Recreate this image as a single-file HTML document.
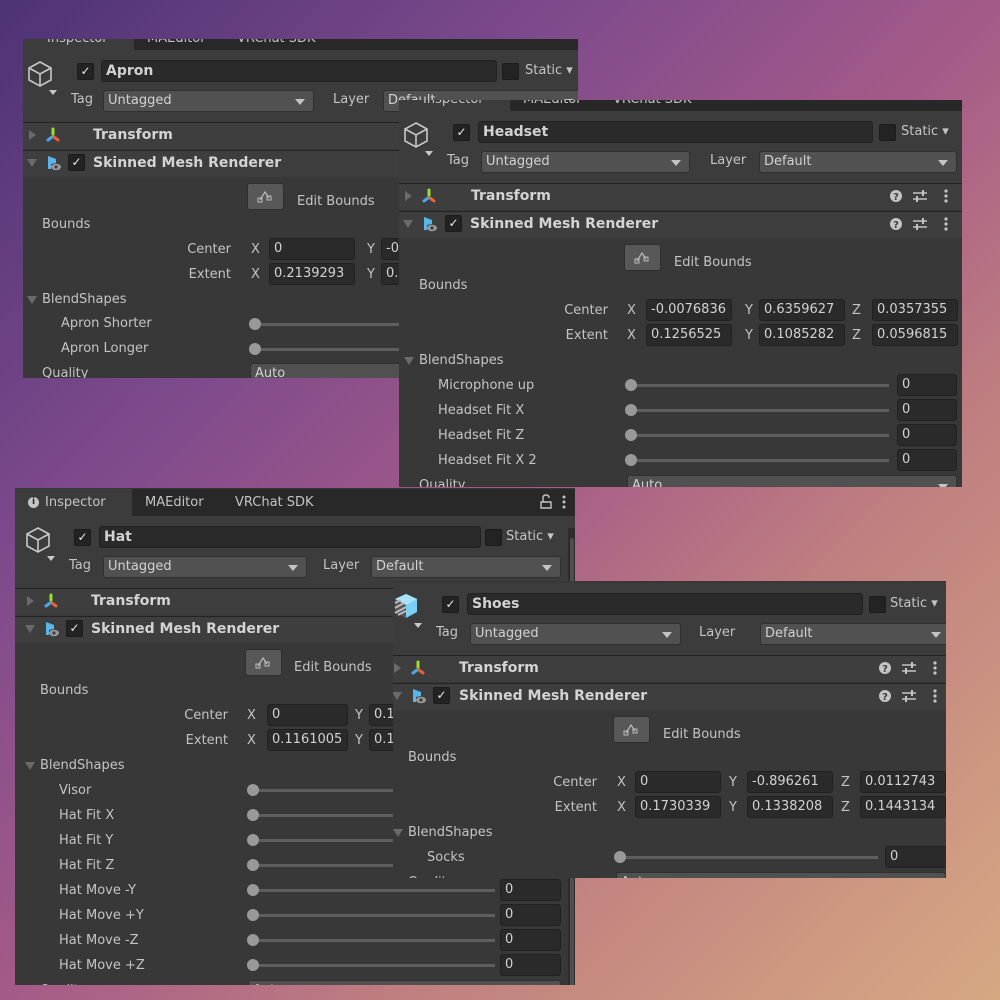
<!DOCTYPE html>
<html><head><meta charset="utf-8"><style>
*{margin:0;padding:0;box-sizing:border-box}
body{width:1000px;height:1000px;overflow:hidden;position:relative;font-family:"DejaVu Sans","Liberation Sans",sans-serif;font-size:13px;color:#c4c4c4;
background:linear-gradient(135deg,#4d3374 0%,#7d4a8c 28%,#a45a88 50%,#c07f80 70%,#d6a882 100%)}
.p{position:absolute;overflow:hidden;background:#383838}
.o{position:absolute}
.a{position:absolute}
.t{position:absolute;height:20px;line-height:20px;white-space:nowrap}
.b{font-weight:bold;color:#d4d4d4;font-size:14px}
.tab{background:#282828;position:absolute;left:-40px;right:-40px;top:-37px;height:27px}
.hd{background:#3c3c3c;position:absolute;left:-40px;right:-40px;top:-10px;height:72px}
.row{background:#3e3e3e;position:absolute;left:-40px;right:-40px;height:27px;border-top:1px solid #232323}
.cb{position:absolute;width:17px;height:17px;background:#232323;border:1px solid #1c1c1c;border-radius:2px;color:#e8e8e8;font-size:12px;line-height:15px;text-align:center}
.fld{position:absolute;height:22px;background:#2a2a2a;border:1px solid #212121;border-radius:3px;line-height:20px;padding-left:4px;white-space:nowrap;overflow:hidden;color:#d2d2d2}
.dd{position:absolute;height:22px;background:#515151;border:1px solid #303030;border-radius:3px;line-height:20px;padding-left:4px;white-space:nowrap;overflow:hidden;color:#d2d2d2}
.dd:after{content:"";position:absolute;right:8px;top:8px;border-left:5px solid transparent;border-right:5px solid transparent;border-top:6px solid #c4c4c4}
.arr{position:absolute;width:0;height:0;border-top:5px solid transparent;border-bottom:5px solid transparent;border-left:7px solid #6a6a6a}
.arrd{position:absolute;width:0;height:0;border-left:5px solid transparent;border-right:5px solid transparent;border-top:8px solid #6a6a6a}
.trk{position:absolute;height:3px;background:#5e5e5e}
.knob{position:absolute;width:12px;height:12px;border-radius:6px;background:#999}
.eb{position:absolute;width:37px;height:27px;background:#585858;border-radius:3px;border:1px solid #2e2e2e}
</style></head><body>

<!-- APRON -->
<div class="p" style="left:23px;top:39px;width:555px;height:339px">
<div class="o" style="left:0;top:21px;width:560px;height:400px">
<div class="tab"><div class="a" style="left:34px;top:0;width:117px;height:27px;background:#3c3c3c"></div></div>
<div class="t" style="left:24px;top:-31px">Inspector</div><div class="t" style="left:124px;top:-31px">MAEditor</div><div class="t" style="left:214px;top:-31px">VRChat SDK</div>
<div class="hd"></div>
<svg class="a" style="left:4px;top:0" width="34" height="36" viewBox="0 0 34 36"><path d="M13 2 L24 8 L24 20 L13 26 L2 20 L2 8 Z M2 8 L13 14 L24 8 M13 14 L13 26" fill="none" stroke="#c8c8c8" stroke-width="1.6"/><path d="M22 30 L30 30 L26 35 Z" fill="#c8c8c8"/></svg>
<div class="cb" style="left:54px;top:3px">✓</div>
<div class="fld b" style="left:78px;top:0;width:396px">Apron</div>
<div class="cb" style="left:479px;top:3px"></div>
<div class="t" style="left:502px;top:1px">Static ▾</div>
<div class="t" style="left:48px;top:30px">Tag</div>
<div class="dd" style="left:80px;top:30px;width:211px">Untagged</div>
<div class="t" style="left:310px;top:30px">Layer</div>
<div class="dd" style="left:360px;top:30px;width:200px">Default</div>
<div class="row" style="top:62px"></div><div class="row" style="top:90px"></div>
<div class="arr" style="left:6px;top:70px"></div>
<svg class="a" style="left:22px;top:67px" width="16" height="16"><path d="M8 2V7" stroke="#9be02e" stroke-width="3" stroke-linecap="round"/><path d="M7 10L3 13" stroke="#4aa8e8" stroke-width="3" stroke-linecap="round"/><path d="M9 10L13 13" stroke="#e8613a" stroke-width="3" stroke-linecap="round"/></svg>
<div class="t b" style="left:70px;top:65px">Transform</div>
<div class="arrd" style="left:4px;top:99px"></div>
<svg class="a" style="left:22px;top:94px" width="18" height="18"><path d="M3 2L11 5V9L6 10V15H3Z" fill="#59b6ea"/><ellipse cx="11" cy="13" rx="5" ry="3.2" fill="#9a9a9a"/><circle cx="11" cy="13" r="1.6" fill="#3e3e3e"/></svg>
<div class="cb" style="left:45px;top:94px">✓</div>
<div class="t b" style="left:70px;top:93px">Skinned Mesh Renderer</div>
<div class="eb" style="left:224px;top:123px"></div>
<svg class="a" style="left:234px;top:129px" width="18" height="14"><path d="M3 11L8 3L12 9" fill="none" stroke="#bbb" stroke-width="1.2"/><rect x="1" y="9" width="4" height="4" fill="none" stroke="#bbb"/><rect x="10" y="7" width="4" height="4" fill="none" stroke="#bbb"/></svg>
<div class="t" style="left:274px;top:132px">Edit Bounds</div>
<div class="t" style="left:19px;top:155px">Bounds</div>
<div class="t" style="left:130px;top:180px;width:78px;text-align:right">Center</div>
<div class="t" style="left:228px;top:180px">X</div><div class="fld" style="left:246px;top:178px;width:86px">0</div>
<div class="t" style="left:344px;top:180px">Y</div><div class="fld" style="left:358px;top:178px;width:86px">-0.0</div>
<div class="t" style="left:130px;top:205px;width:78px;text-align:right">Extent</div>
<div class="t" style="left:228px;top:205px">X</div><div class="fld" style="left:246px;top:203px;width:86px">0.2139293</div>
<div class="t" style="left:344px;top:205px">Y</div><div class="fld" style="left:358px;top:203px;width:86px">0.1</div>
<div class="arrd" style="left:4px;top:236px"></div><div class="t" style="left:19px;top:230px">BlendShapes</div>
<div class="t" style="left:38px;top:254px">Apron Shorter</div><div class="trk" style="left:232px;top:263px;width:260px"></div><div class="knob" style="left:226px;top:258px"></div>
<div class="t" style="left:38px;top:279px">Apron Longer</div><div class="trk" style="left:232px;top:288px;width:260px"></div><div class="knob" style="left:226px;top:283px"></div>
<div class="t" style="left:19px;top:304px">Quality</div><div class="dd" style="left:227px;top:303px;width:330px">Auto</div>
</div></div>

<!-- HEADSET -->
<div class="p" style="left:399px;top:100px;width:563px;height:387px">
<div class="o" style="left:0;top:21px;width:558px;height:400px">
<div class="tab"><div class="a" style="left:34px;top:0;width:117px;height:27px;background:#3c3c3c"></div></div>
<div class="t" style="left:24px;top:-31px">Inspector</div><div class="t" style="left:124px;top:-31px">MAEditor</div><div class="t" style="left:214px;top:-31px">VRChat SDK</div>
<div class="hd"></div>
<svg class="a" style="left:4px;top:0" width="34" height="36" viewBox="0 0 34 36"><path d="M13 2 L24 8 L24 20 L13 26 L2 20 L2 8 Z M2 8 L13 14 L24 8 M13 14 L13 26" fill="none" stroke="#c8c8c8" stroke-width="1.6"/><path d="M22 30 L30 30 L26 35 Z" fill="#c8c8c8"/></svg>
<div class="cb" style="left:54px;top:3px">✓</div>
<div class="fld b" style="left:79px;top:0;width:395px">Headset</div>
<div class="cb" style="left:480px;top:3px"></div>
<div class="t" style="left:502px;top:1px">Static ▾</div>
<div class="t" style="left:48px;top:30px">Tag</div>
<div class="dd" style="left:82px;top:30px;width:209px">Untagged</div>
<div class="t" style="left:311px;top:30px">Layer</div>
<div class="dd" style="left:360px;top:30px;width:198px">Default</div>
<div class="row" style="top:62px"></div><div class="row" style="top:90px"></div>
<div class="arr" style="left:6px;top:70px"></div>
<svg class="a" style="left:22px;top:67px" width="16" height="16"><path d="M8 2V7" stroke="#9be02e" stroke-width="3" stroke-linecap="round"/><path d="M7 10L3 13" stroke="#4aa8e8" stroke-width="3" stroke-linecap="round"/><path d="M9 10L13 13" stroke="#e8613a" stroke-width="3" stroke-linecap="round"/></svg>
<div class="t b" style="left:72px;top:65px">Transform</div>
<div class="arrd" style="left:4px;top:99px"></div>
<svg class="a" style="left:22px;top:94px" width="18" height="18"><path d="M3 2L11 5V9L6 10V15H3Z" fill="#59b6ea"/><ellipse cx="11" cy="13" rx="5" ry="3.2" fill="#9a9a9a"/><circle cx="11" cy="13" r="1.6" fill="#3e3e3e"/></svg>
<div class="cb" style="left:46px;top:94px">✓</div>
<div class="t b" style="left:71px;top:93px">Skinned Mesh Renderer</div>
<svg class="a" style="left:490px;top:68px" width="70" height="14"><circle cx="7" cy="7" r="6" fill="#c4c4c4"/><text x="7" y="11" font-size="10" font-weight="bold" text-anchor="middle" fill="#3e3e3e" font-family="DejaVu Sans">?</text><path d="M24 4H38M24 10H38" stroke="#c4c4c4" stroke-width="1.5"/><path d="M34 1V7M28 7V13" stroke="#c4c4c4" stroke-width="2"/><circle cx="57" cy="2" r="1.6" fill="#c4c4c4"/><circle cx="57" cy="7" r="1.6" fill="#c4c4c4"/><circle cx="57" cy="12" r="1.6" fill="#c4c4c4"/></svg>
<svg class="a" style="left:490px;top:96px" width="70" height="14"><circle cx="7" cy="7" r="6" fill="#c4c4c4"/><text x="7" y="11" font-size="10" font-weight="bold" text-anchor="middle" fill="#3e3e3e" font-family="DejaVu Sans">?</text><path d="M24 4H38M24 10H38" stroke="#c4c4c4" stroke-width="1.5"/><path d="M34 1V7M28 7V13" stroke="#c4c4c4" stroke-width="2"/><circle cx="57" cy="2" r="1.6" fill="#c4c4c4"/><circle cx="57" cy="7" r="1.6" fill="#c4c4c4"/><circle cx="57" cy="12" r="1.6" fill="#c4c4c4"/></svg>
<div class="eb" style="left:225px;top:123px"></div>
<svg class="a" style="left:235px;top:129px" width="18" height="14"><path d="M3 11L8 3L12 9" fill="none" stroke="#bbb" stroke-width="1.2"/><rect x="1" y="9" width="4" height="4" fill="none" stroke="#bbb"/><rect x="10" y="7" width="4" height="4" fill="none" stroke="#bbb"/></svg>
<div class="t" style="left:275px;top:132px">Edit Bounds</div>
<div class="t" style="left:20px;top:155px">Bounds</div>
<div class="t" style="left:130px;top:180px;width:79px;text-align:right">Center</div>
<div class="t" style="left:228px;top:180px">X</div><div class="fld" style="left:247px;top:178px;width:86px">-0.0076836</div>
<div class="t" style="left:346px;top:180px">Y</div><div class="fld" style="left:360px;top:178px;width:86px">0.6359627</div>
<div class="t" style="left:453px;top:180px">Z</div><div class="fld" style="left:473px;top:178px;width:86px">0.0357355</div>
<div class="t" style="left:130px;top:205px;width:79px;text-align:right">Extent</div>
<div class="t" style="left:228px;top:205px">X</div><div class="fld" style="left:247px;top:203px;width:86px">0.1256525</div>
<div class="t" style="left:346px;top:205px">Y</div><div class="fld" style="left:360px;top:203px;width:86px">0.1085282</div>
<div class="t" style="left:453px;top:205px">Z</div><div class="fld" style="left:473px;top:203px;width:86px">0.0596815</div>
<div class="arrd" style="left:5px;top:236px"></div><div class="t" style="left:20px;top:230px">BlendShapes</div>
<div class="t" style="left:39px;top:255px">Microphone up</div><div class="trk" style="left:232px;top:263px;width:258px"></div><div class="knob" style="left:226px;top:258px"></div><div class="fld" style="left:498px;top:253px;width:60px">0</div>
<div class="t" style="left:39px;top:280px">Headset Fit X</div><div class="trk" style="left:232px;top:288px;width:258px"></div><div class="knob" style="left:226px;top:283px"></div><div class="fld" style="left:498px;top:278px;width:60px">0</div>
<div class="t" style="left:39px;top:305px">Headset Fit Z</div><div class="trk" style="left:232px;top:313px;width:258px"></div><div class="knob" style="left:226px;top:308px"></div><div class="fld" style="left:498px;top:303px;width:60px">0</div>
<div class="t" style="left:39px;top:330px">Headset Fit X 2</div><div class="trk" style="left:232px;top:338px;width:258px"></div><div class="knob" style="left:226px;top:333px"></div><div class="fld" style="left:498px;top:328px;width:60px">0</div>
<div class="t" style="left:20px;top:355px">Quality</div><div class="dd" style="left:228px;top:354px;width:330px">Auto</div>
</div></div>

<!-- HAT -->
<div class="p" style="left:15px;top:488px;width:560px;height:497px">
<div class="o" style="left:6px;top:38px;width:542px;height:480px">
<div class="tab"><div class="a" style="left:34px;top:0;width:117px;height:27px;background:#3c3c3c"></div></div>
<div class="a" style="left:7px;top:-29px;width:11px;height:11px;border-radius:6px;background:#c4c4c4;color:#282828;font-size:9px;line-height:11px;text-align:center;font-weight:bold">i</div>
<div class="t" style="left:24px;top:-33px">Inspector</div><div class="t" style="left:124px;top:-33px">MAEditor</div><div class="t" style="left:214px;top:-33px">VRChat SDK</div>
<svg class="a" style="left:518px;top:-32px" width="30" height="16"><path d="M2 14H12V8H2Z M4 8V4Q4 1 7 1Q10 1 10 4" fill="none" stroke="#c4c4c4" stroke-width="1.4"/><circle cx="25" cy="3" r="1.5" fill="#c4c4c4"/><circle cx="25" cy="8" r="1.5" fill="#c4c4c4"/><circle cx="25" cy="13" r="1.5" fill="#c4c4c4"/></svg>
<div class="hd"></div>
<svg class="a" style="left:4px;top:0" width="34" height="36" viewBox="0 0 34 36"><path d="M13 2 L24 8 L24 20 L13 26 L2 20 L2 8 Z M2 8 L13 14 L24 8 M13 14 L13 26" fill="none" stroke="#c8c8c8" stroke-width="1.6"/><path d="M22 30 L30 30 L26 35 Z" fill="#c8c8c8"/></svg>
<div class="cb" style="left:53px;top:3px">✓</div>
<div class="fld b" style="left:78px;top:0;width:382px">Hat</div>
<div class="cb" style="left:464px;top:3px"></div>
<div class="t" style="left:485px;top:1px">Static ▾</div>
<div class="t" style="left:48px;top:30px">Tag</div>
<div class="dd" style="left:82px;top:30px;width:204px">Untagged</div>
<div class="t" style="left:302px;top:30px">Layer</div>
<div class="dd" style="left:350px;top:30px;width:190px">Default</div>
<div class="row" style="top:62px"></div><div class="row" style="top:90px"></div>
<div class="arr" style="left:6px;top:70px"></div>
<svg class="a" style="left:22px;top:67px" width="16" height="16"><path d="M8 2V7" stroke="#9be02e" stroke-width="3" stroke-linecap="round"/><path d="M7 10L3 13" stroke="#4aa8e8" stroke-width="3" stroke-linecap="round"/><path d="M9 10L13 13" stroke="#e8613a" stroke-width="3" stroke-linecap="round"/></svg>
<div class="t b" style="left:70px;top:65px">Transform</div>
<div class="arrd" style="left:4px;top:99px"></div>
<svg class="a" style="left:22px;top:94px" width="18" height="18"><path d="M3 2L11 5V9L6 10V15H3Z" fill="#59b6ea"/><ellipse cx="11" cy="13" rx="5" ry="3.2" fill="#9a9a9a"/><circle cx="11" cy="13" r="1.6" fill="#3e3e3e"/></svg>
<div class="cb" style="left:45px;top:94px">✓</div>
<div class="t b" style="left:70px;top:93px">Skinned Mesh Renderer</div>
<div class="eb" style="left:224px;top:123px"></div>
<svg class="a" style="left:234px;top:129px" width="18" height="14"><path d="M3 11L8 3L12 9" fill="none" stroke="#bbb" stroke-width="1.2"/><rect x="1" y="9" width="4" height="4" fill="none" stroke="#bbb"/><rect x="10" y="7" width="4" height="4" fill="none" stroke="#bbb"/></svg>
<div class="t" style="left:273px;top:132px">Edit Bounds</div>
<div class="t" style="left:19px;top:155px">Bounds</div>
<div class="t" style="left:128px;top:180px;width:79px;text-align:right">Center</div>
<div class="t" style="left:226px;top:180px">X</div><div class="fld" style="left:246px;top:178px;width:81px">0</div>
<div class="t" style="left:334px;top:180px">Y</div><div class="fld" style="left:348px;top:178px;width:81px">0.1</div>
<div class="t" style="left:128px;top:205px;width:79px;text-align:right">Extent</div>
<div class="t" style="left:226px;top:205px">X</div><div class="fld" style="left:246px;top:203px;width:81px">0.1161005</div>
<div class="t" style="left:334px;top:205px">Y</div><div class="fld" style="left:348px;top:203px;width:81px">0.1</div>
<div class="arrd" style="left:4px;top:236px"></div><div class="t" style="left:19px;top:230px">BlendShapes</div>
<div class="t" style="left:38px;top:255px">Visor</div><div class="trk" style="left:232px;top:263px;width:242px"></div><div class="knob" style="left:226px;top:258px"></div><div class="fld" style="left:479px;top:253px;width:61px">0</div>
<div class="t" style="left:38px;top:280px">Hat Fit X</div><div class="trk" style="left:232px;top:288px;width:242px"></div><div class="knob" style="left:226px;top:283px"></div><div class="fld" style="left:479px;top:278px;width:61px">0</div>
<div class="t" style="left:38px;top:305px">Hat Fit Y</div><div class="trk" style="left:232px;top:313px;width:242px"></div><div class="knob" style="left:226px;top:308px"></div><div class="fld" style="left:479px;top:303px;width:61px">0</div>
<div class="t" style="left:38px;top:330px">Hat Fit Z</div><div class="trk" style="left:232px;top:338px;width:242px"></div><div class="knob" style="left:226px;top:333px"></div><div class="fld" style="left:479px;top:328px;width:61px">0</div>
<div class="t" style="left:38px;top:355px">Hat Move -Y</div><div class="trk" style="left:232px;top:363px;width:242px"></div><div class="knob" style="left:226px;top:358px"></div><div class="fld" style="left:479px;top:353px;width:61px">0</div>
<div class="t" style="left:38px;top:380px">Hat Move +Y</div><div class="trk" style="left:232px;top:388px;width:242px"></div><div class="knob" style="left:226px;top:383px"></div><div class="fld" style="left:479px;top:378px;width:61px">0</div>
<div class="t" style="left:38px;top:405px">Hat Move -Z</div><div class="trk" style="left:232px;top:413px;width:242px"></div><div class="knob" style="left:226px;top:408px"></div><div class="fld" style="left:479px;top:403px;width:61px">0</div>
<div class="t" style="left:38px;top:430px">Hat Move +Z</div><div class="trk" style="left:232px;top:438px;width:242px"></div><div class="knob" style="left:226px;top:433px"></div><div class="fld" style="left:479px;top:428px;width:61px">0</div>
<div class="t" style="left:19px;top:455px">Quality</div><div class="dd" style="left:227px;top:454px;width:313px">Auto</div>
</div>
<div class="a" style="left:553px;top:40px;width:7px;height:457px;background:#2c2c2c"></div>
<div class="a" style="left:555px;top:50px;width:4px;height:447px;background:#4e4e4e;border-radius:2px 2px 0 0"></div>
</div>

<!-- SHOES -->
<div class="p" style="left:393px;top:581px;width:553px;height:297px">
<div class="o" style="left:-5px;top:12px;width:562px;height:300px">
<div class="hd"></div>
<svg class="a" style="left:4px;top:0" width="36" height="36" viewBox="0 0 36 36"><path d="M14 1 L25 6 L25 19 L14 25 L3 19 L3 6 Z" fill="#7ccff5"/><path d="M3 6 L14 12 L25 6 L14 1Z" fill="#a8e2fb"/><path d="M3 6 L14 12 L14 25 L3 19Z" fill="#555"/><path d="M3 10L9 7M3 15L12 10M3 20L14 14M6 22L14 18" stroke="#bbb" stroke-width="2"/><path d="M22 30 L30 30 L26 35 Z" fill="#c8c8c8"/></svg>
<div class="cb" style="left:54px;top:3px">✓</div>
<div class="fld b" style="left:79px;top:0;width:396px">Shoes</div>
<div class="cb" style="left:481px;top:3px"></div>
<div class="t" style="left:502px;top:1px">Static ▾</div>
<div class="t" style="left:48px;top:30px">Tag</div>
<div class="dd" style="left:82px;top:30px;width:211px">Untagged</div>
<div class="t" style="left:311px;top:30px">Layer</div>
<div class="dd" style="left:372px;top:30px;width:190px">Default</div>
<div class="row" style="top:62px"></div><div class="row" style="top:90px"></div>
<div class="arr" style="left:6px;top:70px"></div>
<svg class="a" style="left:22px;top:67px" width="16" height="16"><path d="M8 2V7" stroke="#9be02e" stroke-width="3" stroke-linecap="round"/><path d="M7 10L3 13" stroke="#4aa8e8" stroke-width="3" stroke-linecap="round"/><path d="M9 10L13 13" stroke="#e8613a" stroke-width="3" stroke-linecap="round"/></svg>
<div class="t b" style="left:71px;top:65px">Transform</div>
<div class="arrd" style="left:4px;top:99px"></div>
<svg class="a" style="left:22px;top:94px" width="18" height="18"><path d="M3 2L11 5V9L6 10V15H3Z" fill="#59b6ea"/><ellipse cx="11" cy="13" rx="5" ry="3.2" fill="#9a9a9a"/><circle cx="11" cy="13" r="1.6" fill="#3e3e3e"/></svg>
<div class="cb" style="left:45px;top:94px">✓</div>
<div class="t b" style="left:71px;top:93px">Skinned Mesh Renderer</div>
<svg class="a" style="left:490px;top:68px" width="70" height="14"><circle cx="7" cy="7" r="6" fill="#c4c4c4"/><text x="7" y="11" font-size="10" font-weight="bold" text-anchor="middle" fill="#3e3e3e" font-family="DejaVu Sans">?</text><path d="M24 4H38M24 10H38" stroke="#c4c4c4" stroke-width="1.5"/><path d="M34 1V7M28 7V13" stroke="#c4c4c4" stroke-width="2"/><circle cx="57" cy="2" r="1.6" fill="#c4c4c4"/><circle cx="57" cy="7" r="1.6" fill="#c4c4c4"/><circle cx="57" cy="12" r="1.6" fill="#c4c4c4"/></svg>
<svg class="a" style="left:490px;top:96px" width="70" height="14"><circle cx="7" cy="7" r="6" fill="#c4c4c4"/><text x="7" y="11" font-size="10" font-weight="bold" text-anchor="middle" fill="#3e3e3e" font-family="DejaVu Sans">?</text><path d="M24 4H38M24 10H38" stroke="#c4c4c4" stroke-width="1.5"/><path d="M34 1V7M28 7V13" stroke="#c4c4c4" stroke-width="2"/><circle cx="57" cy="2" r="1.6" fill="#c4c4c4"/><circle cx="57" cy="7" r="1.6" fill="#c4c4c4"/><circle cx="57" cy="12" r="1.6" fill="#c4c4c4"/></svg>
<div class="eb" style="left:225px;top:123px"></div>
<svg class="a" style="left:235px;top:129px" width="18" height="14"><path d="M3 11L8 3L12 9" fill="none" stroke="#bbb" stroke-width="1.2"/><rect x="1" y="9" width="4" height="4" fill="none" stroke="#bbb"/><rect x="10" y="7" width="4" height="4" fill="none" stroke="#bbb"/></svg>
<div class="t" style="left:275px;top:132px">Edit Bounds</div>
<div class="t" style="left:20px;top:155px">Bounds</div>
<div class="t" style="left:130px;top:180px;width:79px;text-align:right">Center</div>
<div class="t" style="left:229px;top:180px">X</div><div class="fld" style="left:247px;top:178px;width:86px">0</div>
<div class="t" style="left:341px;top:180px">Y</div><div class="fld" style="left:359px;top:178px;width:86px">-0.896261</div>
<div class="t" style="left:453px;top:180px">Z</div><div class="fld" style="left:472px;top:178px;width:86px">0.0112743</div>
<div class="t" style="left:130px;top:205px;width:79px;text-align:right">Extent</div>
<div class="t" style="left:229px;top:205px">X</div><div class="fld" style="left:247px;top:203px;width:86px">0.1730339</div>
<div class="t" style="left:341px;top:205px">Y</div><div class="fld" style="left:359px;top:203px;width:86px">0.1338208</div>
<div class="t" style="left:453px;top:205px">Z</div><div class="fld" style="left:472px;top:203px;width:86px">0.1443134</div>
<div class="arrd" style="left:5px;top:236px"></div><div class="t" style="left:20px;top:230px">BlendShapes</div>
<div class="t" style="left:39px;top:255px">Socks</div><div class="trk" style="left:232px;top:263px;width:258px"></div><div class="knob" style="left:226px;top:258px"></div><div class="fld" style="left:497px;top:253px;width:62px">0</div>
<div class="t" style="left:20px;top:280px">Quality</div><div class="dd" style="left:228px;top:279px;width:330px">Auto</div>
</div></div>

</body></html>
